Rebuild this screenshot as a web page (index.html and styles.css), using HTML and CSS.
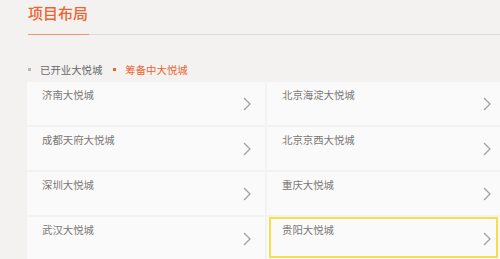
FILE: index.html
```html
<!DOCTYPE html>
<html lang="zh">
<head>
<meta charset="utf-8">
<link rel="stylesheet" href="styles.css">
</head>
<body>
<div class="page">
  <div class="head">
    <h1 class="title">项目布局</h1>
  </div>
  <div class="rule"><span class="rule-mark"></span></div>
  <div class="tabs">
    <span class="tab"><i class="dot"></i>已开业大悦城</span>
    <span class="tab tab-on"><i class="dot"></i>筹备中大悦城</span>
  </div>
  <div class="grid">
    <a class="cell"><span class="name">济南大悦城</span><svg class="chev" viewBox="0 0 8 14"><polyline points="1,1 7,7 1,13"/></svg></a>
    <a class="cell"><span class="name">北京海淀大悦城</span><svg class="chev" viewBox="0 0 8 14"><polyline points="1,1 7,7 1,13"/></svg></a>
    <a class="cell"><span class="name">成都天府大悦城</span><svg class="chev" viewBox="0 0 8 14"><polyline points="1,1 7,7 1,13"/></svg></a>
    <a class="cell"><span class="name">北京京西大悦城</span><svg class="chev" viewBox="0 0 8 14"><polyline points="1,1 7,7 1,13"/></svg></a>
    <a class="cell"><span class="name">深圳大悦城</span><svg class="chev" viewBox="0 0 8 14"><polyline points="1,1 7,7 1,13"/></svg></a>
    <a class="cell"><span class="name">重庆大悦城</span><svg class="chev" viewBox="0 0 8 14"><polyline points="1,1 7,7 1,13"/></svg></a>
    <a class="cell"><span class="name">武汉大悦城</span><svg class="chev" viewBox="0 0 8 14"><polyline points="1,1 7,7 1,13"/></svg></a>
    <a class="cell cell-active"><span class="name">贵阳大悦城</span><svg class="chev" viewBox="0 0 8 14"><polyline points="1,1 7,7 1,13"/></svg></a>
  </div>
</div>
</body>
</html>
```

FILE: styles.css
```css
html, body {
  margin: 0;
  padding: 0;
  background: #f3f2f1;
  overflow: hidden;
}
body {
  width: 500px;
  height: 259px;
  font-family: "Noto Sans CJK SC", "Noto Sans", sans-serif;
}
.page {
  width: 500px;
  overflow: hidden;
}
.head {
  padding: 2px 0 0 28px;
  height: 32px;
  box-sizing: border-box;
  height: 34px;
}
.title {
  margin: 0;
  font-size: 15px;
  line-height: 22px;
  font-weight: 500;
  color: #ee6430;
}
.rule {
  height: 1px;
  margin-left: 28px;
  background: #dedcda;
  display: flex;
}
.rule-mark {
  display: block;
  width: 61px;
  height: 1px;
  background: #f29474;
}
.tabs {
  display: flex;
  gap: 11px;
  padding: 22px 0 0 28px;
  height: 25px;
  font-size: 10.4px;
  line-height: 15px;
}
.tab {
  display: flex;
  align-items: center;
  color: #6a6866;
}
.tab-on {
  color: #ee6430;
}
.dot {
  display: block;
  width: 3px;
  height: 3px;
  background: #b9b7b5;
  margin-right: 9px;
}
.tab-on .dot {
  background: #ee6430;
}
.grid {
  display: grid;
  grid-template-columns: 238px 238px;
  grid-auto-rows: 43px;
  gap: 2px;
  margin-left: 27px;
  width: 480px;
}
.cell {
  position: relative;
  display: block;
  background: #fbfafa;
  padding: 5px 0 0 15px;
  box-sizing: border-box;
}
.name {
  display: block;
  font-size: 10.4px;
  line-height: 15px;
  color: #7a7876;
}
.chev {
  position: absolute;
  right: 14px;
  top: 15px;
  width: 8px;
  height: 14px;
  fill: none;
  stroke: #a3a19f;
  stroke-width: 1.3;
}
.cell-active::after {
  content: "";
  position: absolute;
  left: 2px;
  top: 0;
  width: 229px;
  height: 41px;
  border: 2px solid #f6df4a;
  box-sizing: border-box;
}
```
